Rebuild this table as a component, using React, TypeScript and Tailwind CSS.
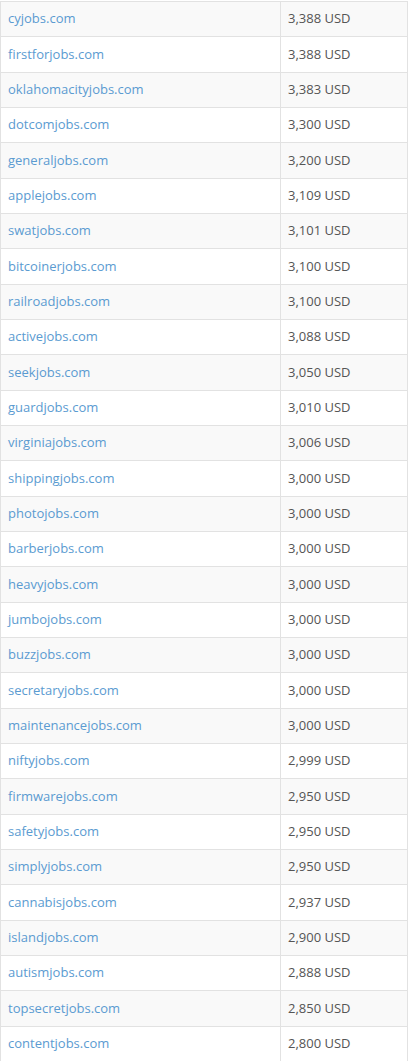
import React from 'react'

type Row = { domain: string; price: string }

const rows: Row[] = [
    { domain: 'cyjobs.com', price: '3,388 USD' },
    { domain: 'firstforjobs.com', price: '3,388 USD' },
    { domain: 'oklahomacityjobs.com', price: '3,383 USD' },
    { domain: 'dotcomjobs.com', price: '3,300 USD' },
    { domain: 'generaljobs.com', price: '3,200 USD' },
    { domain: 'applejobs.com', price: '3,109 USD' },
    { domain: 'swatjobs.com', price: '3,101 USD' },
    { domain: 'bitcoinerjobs.com', price: '3,100 USD' },
    { domain: 'railroadjobs.com', price: '3,100 USD' },
    { domain: 'activejobs.com', price: '3,088 USD' },
    { domain: 'seekjobs.com', price: '3,050 USD' },
    { domain: 'guardjobs.com', price: '3,010 USD' },
    { domain: 'virginiajobs.com', price: '3,006 USD' },
    { domain: 'shippingjobs.com', price: '3,000 USD' },
    { domain: 'photojobs.com', price: '3,000 USD' },
    { domain: 'barberjobs.com', price: '3,000 USD' },
    { domain: 'heavyjobs.com', price: '3,000 USD' },
    { domain: 'jumbojobs.com', price: '3,000 USD' },
    { domain: 'buzzjobs.com', price: '3,000 USD' },
    { domain: 'secretaryjobs.com', price: '3,000 USD' },
    { domain: 'maintenancejobs.com', price: '3,000 USD' },
    { domain: 'niftyjobs.com', price: '2,999 USD' },
    { domain: 'firmwarejobs.com', price: '2,950 USD' },
    { domain: 'safetyjobs.com', price: '2,950 USD' },
    { domain: 'simplyjobs.com', price: '2,950 USD' },
    { domain: 'cannabisjobs.com', price: '2,937 USD' },
    { domain: 'islandjobs.com', price: '2,900 USD' },
    { domain: 'autismjobs.com', price: '2,888 USD' },
    { domain: 'topsecretjobs.com', price: '2,850 USD' },
    { domain: 'contentjobs.com', price: '2,800 USD' },
]

export default function App() {
    return (
        <div className="w-[415px] h-[1061px] overflow-hidden bg-white font-['Open_Sans',sans-serif] text-[13px]">
            <table className="w-[408px] mt-px border-collapse table-fixed">
                <tbody>
                    {rows.map((row, i) => (
                        <tr
                            key={row.domain}
                            className={i % 2 === 0 ? 'bg-[#f9f9f9]' : 'bg-white'}
                        >
                            <td className="w-[280px] h-[35.34px] border border-[#e2e2e2] px-[7px] py-0 align-middle text-[#5b9bd1]">
                                <a href="#">{row.domain}</a>
                            </td>
                            <td className="h-[35.34px] border border-[#e2e2e2] px-[7px] py-0 align-middle text-[#555]">
                                {row.price}
                            </td>
                        </tr>
                    ))}
                </tbody>
            </table>
        </div>
    )
}
